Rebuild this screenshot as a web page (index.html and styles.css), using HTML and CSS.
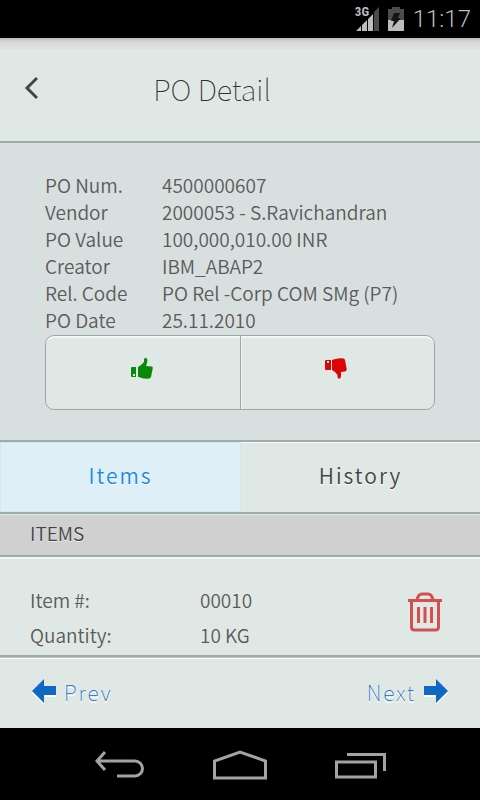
FILE: index.html
```html
<!DOCTYPE html>
<html lang="en">
<head>
<meta charset="utf-8">
<meta name="viewport" content="width=device-width, initial-scale=1">
<title>PO Detail</title>
<link rel="stylesheet" href="styles.css">
</head>
<body>
<div class="status-bar">
  <svg class="signal" width="26" height="26" viewBox="0 0 26 26" aria-hidden="true">
    <path fill="#4c4c4c" d="M20 6l5-5v24h-5z"/>
    <path fill="#bdbdbd" d="M2 25l5-5v5zM8 19l5-5v11H8zM14 13l5-5v17h-5z"/>
  </svg>
  <span class="network">3G</span>
  <svg class="battery" width="16" height="24" viewBox="0 0 16 24" aria-hidden="true">
    <path fill="#4c4c4c" d="M4 0h8v2h4v11H0V2h4z"/>
    <path fill="#bdbdbd" d="M0 13h16v11H0z"/>
    <path fill="#151515" d="M6 6h6l-2 5h3L4 21l2-7H3z"/>
  </svg>
  <span class="clock">11:17</span>
</div>

<header class="header">
  <button class="back" type="button" aria-label="Back">
    <svg width="14" height="24" viewBox="0 0 14 24" aria-hidden="true"><path fill="none" stroke="#444" stroke-width="3" d="M13 2L3 12l10 10"/></svg>
  </button>
  <h1>PO Detail</h1>
</header>

<main>
  <section class="details">
    <dl class="facts">
      <dt>PO Num.</dt><dd>4500000607</dd>
      <dt>Vendor</dt><dd>2000053 - S.Ravichandran</dd>
      <dt>PO Value</dt><dd>100,000,010.00 INR</dd>
      <dt>Creator</dt><dd>IBM_ABAP2</dd>
      <dt>Rel. Code</dt><dd>PO Rel -Corp COM SMg (P7)</dd>
      <dt>PO Date</dt><dd>25.11.2010</dd>
    </dl>
    <div class="decision">
      <button type="button" aria-label="Approve">
        <svg width="22" height="21" viewBox="0 0 22 21" aria-hidden="true">
          <path fill="#078a07" fill-rule="evenodd" d="M1 9h4v10H1q-1 0-1-1v-8q0-1 1-1zM2 16v2h2v-2zM7 9l3-2 3-3V1q1-1.400 2.500-.7Q17 1 16 5l-1 3 6 .5q1 .5.700 2L20 19q-.5 1.500-3 1.700-5 .3-10-2z"/>
        </svg>
      </button>
      <button type="button" aria-label="Reject">
        <svg width="22" height="21" viewBox="0 0 22 21" aria-hidden="true">
          <path fill="#db0505" fill-rule="evenodd" d="M1 2h5v10H1q-1 0-1-1V3q0-1 1-1zM2 3v2h2V3zM7 2q5-2 10-1.700 3 .2 3 1.700l1.700 9q.3 2-1.700 2.500l-4 .5v4q0 2.700-2 2.700-1.500 0-1.500-2V17L10 14l-3-2z"/>
        </svg>
      </button>
    </div>
  </section>

  <nav class="tabs">
    <button class="tab selected" type="button">Items</button>
    <button class="tab" type="button">History</button>
  </nav>

  <h2 class="list-title">ITEMS</h2>
  <section class="item">
    <dl class="item-facts">
      <dt>Item #:</dt><dd>00010</dd>
      <dt>Quantity:</dt><dd>10 KG</dd>
    </dl>
    <button class="delete" type="button" aria-label="Delete item">
      <svg width="36" height="40" viewBox="0 0 36 40" aria-hidden="true">
        <g fill="none" stroke="#d4504f" stroke-width="3">
          <path d="M1 8.500h34M10 8c1-5 3-6 5-6h6c2 0 4 1 5 6"/>
          <path d="M4.500 9v26q0 3 3 3h21q3 0 3-3V9"/>
          <path d="M11.500 15v16M18 15v16M24.500 15v16"/>
        </g>
      </svg>
    </button>
  </section>
</main>

<footer class="pager">
  <button type="button">
    <svg width="24" height="24" viewBox="0 0 24 24" aria-hidden="true"><path fill="#0f69c4" d="M0 12L12 0v7h12v9H12v8z"/></svg>
    <span>Prev</span>
  </button>
  <button type="button">
    <span>Next</span>
    <svg width="24" height="24" viewBox="0 0 24 24" aria-hidden="true"><path fill="#0f69c4" d="M24 12L12 0v7H0v9h12v8z"/></svg>
  </button>
</footer>

<nav class="system-nav">
  <button type="button" aria-label="System back">
    <svg width="50" height="28" viewBox="0 0 50 28" aria-hidden="true"><path fill="none" stroke="#a3a3a3" stroke-width="3" d="M10 1L2 10l8 9M2 10h38a7.500 7.500 0 0 1 0 15H22"/></svg>
  </button>
  <button type="button" aria-label="Home">
    <svg width="54" height="30" viewBox="0 0 54 30" aria-hidden="true"><path fill="none" stroke="#a3a3a3" stroke-width="3" d="M1.500 28V11L27 2l25.500 9v17z"/></svg>
  </button>
  <button type="button" aria-label="Recent apps">
    <svg width="52" height="28" viewBox="0 0 52 28" aria-hidden="true"><path fill="none" stroke="#a3a3a3" stroke-width="3" d="M1.500 11h39v15h-39zM12 3.500h37.500V20"/></svg>
  </button>
</nav>
</body>
</html>
```
FILE: styles.css
```css
* {
  box-sizing: border-box;
}

body {
  margin: 0;
  min-height: 100vh;
  display: flex;
  flex-direction: column;
  background: #e0e8e6;
  color: #5b5b5b;
  font-family: "Noto Sans CJK SC", "Noto Sans", sans-serif;
  font-size: 19px;
  font-weight: 350;
  line-height: 27px;
}

button {
  display: flex;
  align-items: center;
  justify-content: center;
  margin: 0;
  padding: 0;
  border: 0;
  background: none;
  color: inherit;
  font: inherit;
  letter-spacing: inherit;
  text-shadow: inherit;
}

svg {
  display: block;
  flex: none;
}

dl,
dd,
h1,
h2 {
  margin: 0;
}

.status-bar {
  position: relative;
  display: flex;
  align-items: center;
  justify-content: flex-end;
  height: 38px;
  padding-right: 9px;
  background: #000;
  color: #bdbdbd;
  font-family: Roboto, sans-serif;
}

.signal {
  margin-right: 8px;
}

.network {
  position: absolute;
  top: 5px;
  right: 111px;
  font-family: "Roboto Condensed", Roboto, sans-serif;
  font-size: 13px;
  font-weight: 700;
  line-height: 14px;
}

.clock {
  margin-left: 9px;
  font-size: 24px;
  font-weight: 300;
}

.header {
  display: grid;
  grid-template-columns: 62px 1fr 118px;
  align-items: center;
  height: 105px;
  padding-bottom: 4px;
  border-bottom: 2px solid #9cacab;
  background: linear-gradient(#bbb, #d9d9d9 4px, #e0e0de 11px, #e1e8e1 12px, #e0e8e6 16px);
}

.back {
  height: 60px;
}

h1 {
  color: #333;
  font-size: 29px;
  font-weight: 100;
  line-height: 40px;
  text-align: center;
}

main {
  flex: 1;
}

.details {
  padding: 28px 45px 30px;
  background: #d8e0df;
}

.facts {
  display: grid;
  grid-template-columns: 117px 1fr;
}

.decision {
  display: flex;
  height: 75px;
  margin-top: 2px;
  border: 1px solid #9aa8a6;
  border-radius: 9px;
  background: #e0e8e6;
  box-shadow: inset 0 2px 0 #f3f6f5;
}

.decision button {
  flex: 1;
  padding: 0 2px 8px 0;
}

.decision button + button {
  border-left: 1px solid #9aa8a6;
  box-shadow: inset 1px 0 0 #f3f6f5;
}

.tabs {
  display: flex;
  height: 74px;
  border-top: 2px solid #9cacab;
  border-bottom: 2px solid #9cacab;
}

.tab {
  flex: 1;
  padding-bottom: 4px;
  box-shadow: inset 0 1px 0 #f8fafa;
  color: #444;
  font-size: 21px;
  letter-spacing: 2px;
  text-shadow: 0 1px 0 #fff;
}

.tab.selected {
  border: 1px solid #d3e7ef;
  background: #dfeff8;
  box-shadow: none;
  color: #218ade;
}

.list-title {
  height: 43px;
  padding: 4px 30px 8px;
  border-top: 1px solid #e4e6e6;
  border-bottom: 2px solid #9cacab;
  background: #d0d0d0;
  color: #444;
  font-size: 19px;
  font-weight: 350;
  text-shadow: 0 1px 0 #eee;
}

.item {
  display: flex;
  justify-content: space-between;
  padding: 23px 37px 0 30px;
  border-top: 2px solid #f4f7f7;
}

.item-facts {
  display: grid;
  grid-template-columns: 170px 1fr;
  line-height: 35px;
}

.delete {
  align-self: flex-start;
  margin-top: 10px;
}

.pager {
  display: flex;
  justify-content: space-between;
  height: 73px;
  padding: 0 32px;
  border-top: 2px solid #9cacab;
  box-shadow: inset 0 1px 0 #b8c4c3, inset 0 2px 0 #fff;
  color: #0f69c4;
  font-size: 21px;
  font-weight: 100;
  letter-spacing: 2px;
  text-shadow: 0 2px 0 #fff;
}

.pager button {
  gap: 8px;
  padding-bottom: 4px;
}

.pager svg {
  filter: drop-shadow(0 2px 0 #fff);
}

.pager span {
  padding-top: 4px;
}

.system-nav {
  display: flex;
  align-items: center;
  justify-content: center;
  gap: 68px;
  height: 72px;
  padding: 2px 0 0 2px;
  background: #000;
}
```
